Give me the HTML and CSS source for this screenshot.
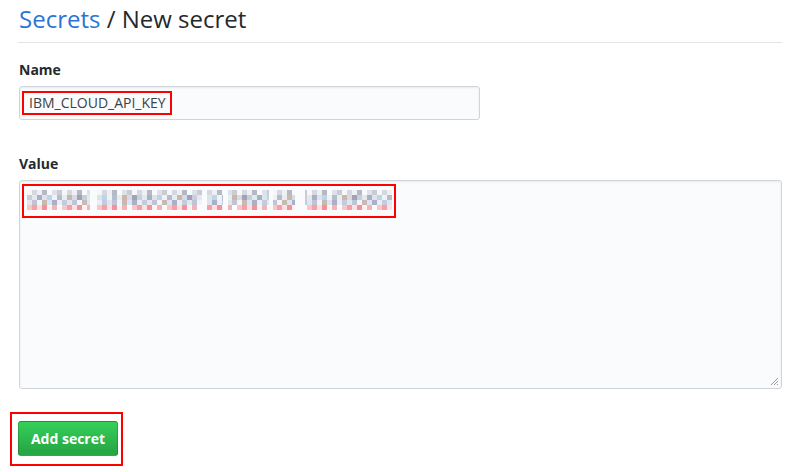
FILE: index.html
```html
<!DOCTYPE html>
<html>
<head>
<meta charset="utf-8">
<link rel="stylesheet" href="styles.css">
</head>
<body>
<div class="page">
  <div class="subhead">
    <h1 class="title"><a class="crumb" href="#">Secrets</a> / New secret</h1>
  </div>
  <form class="form">
    <div class="field name-field">
      <label class="label">Name</label>
      <div class="input">
        <span class="mark name-mark">IBM_CLOUD_API_KEY</span>
      </div>
    </div>
    <div class="field value-field">
      <label class="label">Value</label>
      <div class="textarea">
        <div class="mark value-mark"><div class="pixels"></div></div>
        <svg class="grip" width="9" height="9" viewBox="0 0 9 9"><path d="M8 1L1 8M8 4L4 8M8 7L7 8" stroke="#999" stroke-width="1" fill="none"/></svg>
      </div>
    </div>
    <div class="actions">
      <span class="btn-mark"><button class="btn" type="button">Add secret</button></span>
    </div>
  </form>
</div>
</body>
</html>
```
FILE: styles.css
```css
html, body { margin: 0; padding: 0; background: #fff; }
body {
  font-family: "Open Sans", "Noto Sans", "Liberation Sans", sans-serif;
  color: #24292e;
  font-size: 14px;
}
.page { padding: 0 18px; }
.subhead {
  border-bottom: 1px solid #e1e4e8;
  padding: 2px 0 6px 1px;
}
.title {
  margin: 0;
  font-size: 24px;
  font-weight: 400;
  line-height: 34px;
  color: #24292e;
}
.crumb { color: #2a74d8; text-decoration: none; }
.form { padding-top: 17px; }
.field { padding-left: 1px; }
.label {
  display: block;
  font-weight: 700;
  font-size: 14px;
  line-height: 20px;
  margin-bottom: 6px;
}
.input {
  box-sizing: border-box;
  width: 461px;
  height: 34px;
  background: #fafbfc;
  border: 1px solid #d1d5da;
  border-radius: 3px;
  box-shadow: inset 0 1px 2px rgba(27,31,35,.075);
  padding: 4px 2px;
  display: flex;
  align-items: flex-start;
}
.mark { border: 2px solid #ff0000; box-sizing: border-box; }
.name-mark {
  height: 24px;
  padding: 0 4px 0 5px;
  line-height: 20px;
  color: #3d4247;
  font-size: 14px;
}
.value-field { margin-top: 34px; }
.textarea {
  position: relative;
  box-sizing: border-box;
  width: 763px;
  height: 209px;
  background: #fafbfc;
  border: 1px solid #d1d5da;
  border-radius: 3px;
  box-shadow: inset 0 1px 2px rgba(27,31,35,.075);
  padding: 3px 2px;
}
.value-mark {
  width: 374px;
  height: 34px;
  padding: 2px 3px;
}
.pixels {
  width: 365px;
  height: 25px;
  background:
    linear-gradient(90deg, transparent 0 63px, #fafbfc 63px 70px, transparent 70px 175px, #fafbfc 175px 180px, transparent 180px 196px, #fafbfc 196px 201px, transparent 201px 242px, #fafbfc 242px 246px, transparent 246px 268px, #fafbfc 268px 278px, transparent 278px) 0 0 / 100% 100% no-repeat,
    repeating-linear-gradient(90deg, #fcc6c9 0 5px, #fa9ea4 5px 10px, #fde2e4 10px 15px, #fb8f96 15px 20px, #fff3f3 20px 25px, #f8b2b6 25px 30px, #fff 30px 35px) 0 17px / 100% 5px no-repeat,
    repeating-linear-gradient(90deg, #c9cedb 0 5px, #e6e8ef 5px 10px, #a9afc4 10px 15px, #dfe3ea 15px 20px, #b9d6ea 20px 25px, #f1f2f5 25px 30px, #b7bccc 30px 35px, #e9edf3 35px 40px, #cdb7a9 40px 45px, #d8dbe6 45px 50px, #9fa3b8 50px 55px) 0 7px / 100% 5px no-repeat,
    repeating-linear-gradient(90deg, #e3e6ec 0 5px, #bfc5d6 5px 10px, #f3f4f7 10px 15px, #c8b9b2 15px 20px, #dde6f0 20px 25px, #aab1c6 25px 30px, #eceef2 30px 35px, #c0cde0 35px 40px) 0 12px / 100% 5px no-repeat,
    repeating-linear-gradient(90deg, #f6f7f9 0 5px, #d5d8df 5px 10px, #eef0f4 10px 15px, #b5b9c4 15px 20px, #f9fafb 20px 25px, #dde1e8 25px 30px, #c9ccd4 30px 35px) 0 2px / 100% 5px no-repeat;
}
.grip { position: absolute; right: 2px; bottom: 2px; }
.actions { margin-top: 23px; margin-left: -8px; }
.btn-mark {
  display: inline-block;
  border: 2px solid #ff0000;
  padding: 7px 3px 8px 6px;
}
.btn {
  display: block;
  box-sizing: border-box;
  width: 100px;
  height: 35px;
  font-family: inherit;
  font-size: 14px;
  font-weight: 700;
  color: #fff;
  background: linear-gradient(-180deg, #34d058 0%, #28a745 90%);
  border: 1px solid rgba(27,31,35,.2);
  border-radius: 3px;
  padding: 0;
  line-height: 20px;
}
```
